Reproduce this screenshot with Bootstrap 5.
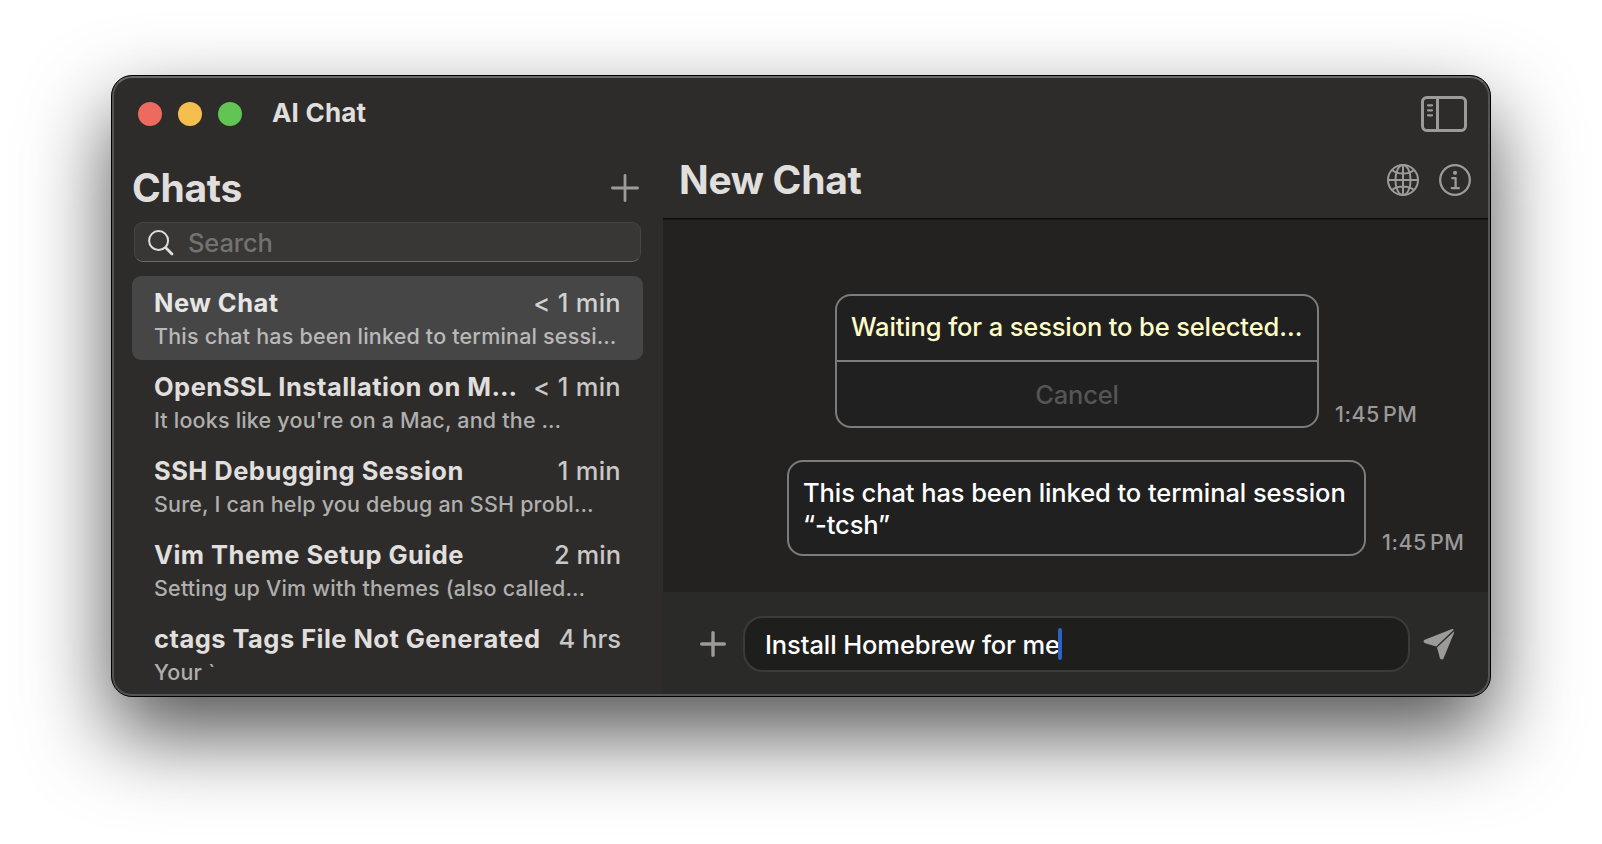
<!DOCTYPE html>
<html lang="en" data-bs-theme="dark">
<head>
<meta charset="utf-8">
<meta name="viewport" content="width=device-width, initial-scale=1">
<title>AI Chat</title>
<link rel="stylesheet" href="https://cdn.jsdelivr.net/npm/bootstrap@5.3.0/dist/css/bootstrap.min.css">
<style>
  html, body { height: 100%; }
  body { background: #fff; color: #e0dfde; font-family: Inter, "Liberation Sans", sans-serif; font-weight: 450; overflow: hidden; padding: 75px 0 0 111px; }
  svg { display: block; flex: none; }
  .icon { color: #9c9b99; }

  .app-window { width: 1380px; height: 622px; border: 1px solid #000; border-radius: 21px; background: #2d2c2a; box-shadow: 0 37px 84px rgba(0,0,0,.68); }
  .app-window::after { content: ""; position: absolute; inset: 0; border-radius: 20px; border: 2px solid #555452; border-top-color: #6b6a68; pointer-events: none; }

  .title-bar { height: 76px; padding: 0 23px 0 26px; }
  .dot { width: 24px; height: 24px; border-radius: 50%; }
  .dot-close { background: #ed6a5e; }
  .dot-min { background: #f5bf4f; }
  .dot-max { background: #61c554; }
  .app-title { font-size: 26px; line-height: 32px; font-weight: 700; letter-spacing: .2px; color: #e0dfde; margin: 0 0 3px 30px; }

  .chat-list { width: 551px; padding: 0 20px; }
  .pane-title { font-size: 39px; line-height: 48px; font-weight: 700; letter-spacing: -.3px; color: #e0dfde; }
  .list-head { height: 70px; padding: 2px 4px 0 0; }
  .search-box { height: 40px; margin: 0 2px 14px; padding: 1px 0 0 13px; border: 1px solid #464543; border-bottom-color: #6b6a68; border-radius: 9px; background: #383735; color: #737270; font-size: 25.5px; line-height: 32px; letter-spacing: -.15px; gap: 14px; }
  .chat-row { height: 84px; padding: 11px 22px 0; border-radius: 9px; }
  .chat-row.current { background: #464646; }
  .row-name { font-size: 25.5px; line-height: 32px; font-weight: 700; letter-spacing: .46px; white-space: nowrap; }
  .row-age { font-size: 25.5px; line-height: 32px; color: #c9c8c7; white-space: nowrap; }
  .row-age.tracked { letter-spacing: .3px; }
  .row-text { font-size: 21.5px; line-height: 30px; margin-top: 2px; letter-spacing: .19px; color: #b0afae; white-space: nowrap; }
  .current .row-name { color: #e6e6e6; }
  .current .row-age { color: #d0d0d0; }
  .current .row-text { color: #b9b9b9; }

  .chat-head { height: 66px; padding: 0 20px 11px 16px; }
  .messages { background: #242220; border-top: 1px solid #0b0b0a; box-shadow: inset 0 1px #181716; padding-top: 75px; gap: 32px; }
  .bubble { border: 2px solid #7c7c7c; border-radius: 16px; background: #202020; font-size: 25.5px; line-height: 32px; white-space: nowrap; }
  .wait-msg { margin-left: 172px; }
  .wait-msg .bubble { width: 484px; height: 134px; }
  .wait-text { height: 66px; border-bottom: 2px solid #7c7c7c; padding: 15px 0 0 14px; color: #fffcc8; letter-spacing: -.13px; }
  .wait-cancel { color: #555; padding-top: 17px; letter-spacing: -.15px; }
  .link-msg { margin-left: 124px; }
  .link-msg .bubble { width: 579px; height: 96px; padding: 15px 0 0 14px; color: #fff; letter-spacing: -.08px; }
  .stamp { font-size: 21.5px; line-height: 28px; color: #9a9998; margin-left: 16px; letter-spacing: .5px; word-spacing: -3px; white-space: nowrap; }

  .composer { height: 104px; background: #2a2a28; padding: 0 36px 0 37px; }
  .compose-field { width: 667px; height: 56px; border: 2px solid #3b3b39; border-radius: 20px; background: #1e1e1c; color: #fff; font-size: 25.5px; line-height: 32px; letter-spacing: -.1px; margin: 0 13px 0 17px; padding: 0 0 0 20px; white-space: nowrap; }
  .compose-field .draft { padding-top: 2px; }
  .caret { width: 4px; height: 32px; border-radius: 2px; background: #2c62c4; margin-left: -2px; }
</style>
</head>
<body>
<main class="app-window position-relative d-flex flex-column overflow-hidden">
  <header class="title-bar d-flex align-items-center">
    <div class="d-flex gap-3">
      <span class="dot dot-close"></span>
      <span class="dot dot-min"></span>
      <span class="dot dot-max"></span>
    </div>
    <h1 class="app-title">AI Chat</h1>
    <svg class="icon ms-auto" width="46" height="36" viewBox="0 0 46 36" fill="none" stroke="currentColor" stroke-width="3">
      <rect x="1.5" y="1.5" width="43" height="33" rx="4.2"/>
      <path d="M16.5 2v32"/>
      <path d="M7 9.3h4M7 14.3h4M7 19.3h4" stroke-width="2.2" stroke-linecap="round"/>
    </svg>
  </header>

  <div class="d-flex flex-grow-1">
    <aside class="chat-list flex-shrink-0">
      <div class="list-head d-flex align-items-center justify-content-between">
        <h2 class="pane-title mb-0">Chats</h2>
        <svg class="icon" width="28" height="28" viewBox="0 0 28 28" stroke="currentColor" stroke-width="2.8" stroke-linecap="round"><path d="M14 1.4v25.2M1.4 14h25.2"/></svg>
      </div>
      <div class="search-box d-flex align-items-center">
        <svg width="26" height="26" viewBox="0 0 26 26" fill="none" stroke="#dfdedd" stroke-linecap="round"><circle cx="10.6" cy="10.6" r="9.5" stroke-width="2"/><path d="M17.8 17.8l6.2 6.2" stroke-width="2.8"/></svg>
        <span>Search</span>
      </div>
      <div class="chat-row current">
        <div class="d-flex justify-content-between"><span class="row-name">New Chat</span><span class="row-age tracked">&lt; 1 min</span></div>
        <div class="row-text">This chat has been linked to terminal sessi…</div>
      </div>
      <div class="chat-row">
        <div class="d-flex justify-content-between"><span class="row-name">OpenSSL Installation on M…</span><span class="row-age tracked">&lt; 1 min</span></div>
        <div class="row-text">It looks like you're on a Mac, and the …</div>
      </div>
      <div class="chat-row">
        <div class="d-flex justify-content-between"><span class="row-name">SSH Debugging Session</span><span class="row-age tracked">1 min</span></div>
        <div class="row-text">Sure, I can help you debug an SSH probl…</div>
      </div>
      <div class="chat-row">
        <div class="d-flex justify-content-between"><span class="row-name">Vim Theme Setup Guide</span><span class="row-age">2 min</span></div>
        <div class="row-text">Setting up Vim with themes (also called…</div>
      </div>
      <div class="chat-row">
        <div class="d-flex justify-content-between"><span class="row-name">ctags Tags File Not Generated</span><span class="row-age">4 hrs</span></div>
        <div class="row-text">Your `</div>
      </div>
    </aside>

    <section class="flex-grow-1 d-flex flex-column">
      <div class="chat-head d-flex align-items-center">
        <h2 class="pane-title mb-0">New Chat</h2>
        <div class="icon d-flex ms-auto" style="gap:20px">
          <svg width="32" height="32" viewBox="0 0 32 32" fill="none" stroke="currentColor" stroke-width="2">
            <circle cx="16" cy="16" r="15"/>
            <ellipse cx="16" cy="16" rx="7.6" ry="15"/>
            <path d="M16 1v30M1 16h30M5.2 6.2c2.8 2.2 6.6 3.3 10.8 3.3s8-1.1 10.8-3.3M5.2 25.8c2.8-2.2 6.6-3.3 10.8-3.3s8 1.1 10.8 3.3"/>
          </svg>
          <svg width="32" height="32" viewBox="0 0 32 32" fill="none" stroke="currentColor" stroke-width="2.3" stroke-linecap="round" stroke-linejoin="round">
            <circle cx="16" cy="16" r="14.8"/>
            <path d="M13.3 14.2h3.3v9.8M12.8 24.2h7"/>
            <circle cx="16" cy="8.8" r="2.1" fill="currentColor" stroke="none"/>
          </svg>
        </div>
      </div>
      <div class="messages flex-grow-1 d-flex flex-column">
        <div class="wait-msg d-flex align-items-end">
          <div class="bubble">
            <div class="wait-text">Waiting for a session to be selected…</div>
            <div class="wait-cancel text-center">Cancel</div>
          </div>
          <time class="stamp">1:45 PM</time>
        </div>
        <div class="link-msg d-flex align-items-end">
          <div class="bubble">This chat has been linked to terminal session<br>“-tcsh”</div>
          <time class="stamp">1:45 PM</time>
        </div>
      </div>
      <div class="composer d-flex align-items-center">
        <svg class="icon" width="26" height="26" viewBox="0 0 26 26" stroke="currentColor" stroke-width="3.4" stroke-linecap="round"><path d="M13 1.7v22.6M1.7 13h22.6"/></svg>
        <div class="compose-field d-flex align-items-center"><span class="draft">Install Homebrew for me</span><span class="caret"></span></div>
        <svg class="icon" width="32" height="32" viewBox="0 0 32 32" fill="currentColor">
          <path d="M28.4 1.2c1-.4 1.9-.1 2.3.6L13.2 18.6 2.2 15.3C.2 14.6-.1 12.6 1.700 11.800z"/>
          <path d="M31.2 3.3c.1.6 0 1-.2 1.6L20.6 30.3c-.8 1.7-3.1 1.6-3.7-.2L14 19.6z"/>
        </svg>
      </div>
    </section>
  </div>
</main>
<script src="https://cdn.jsdelivr.net/npm/bootstrap@5.3.0/dist/js/bootstrap.bundle.min.js"></script>
</body>
</html>
